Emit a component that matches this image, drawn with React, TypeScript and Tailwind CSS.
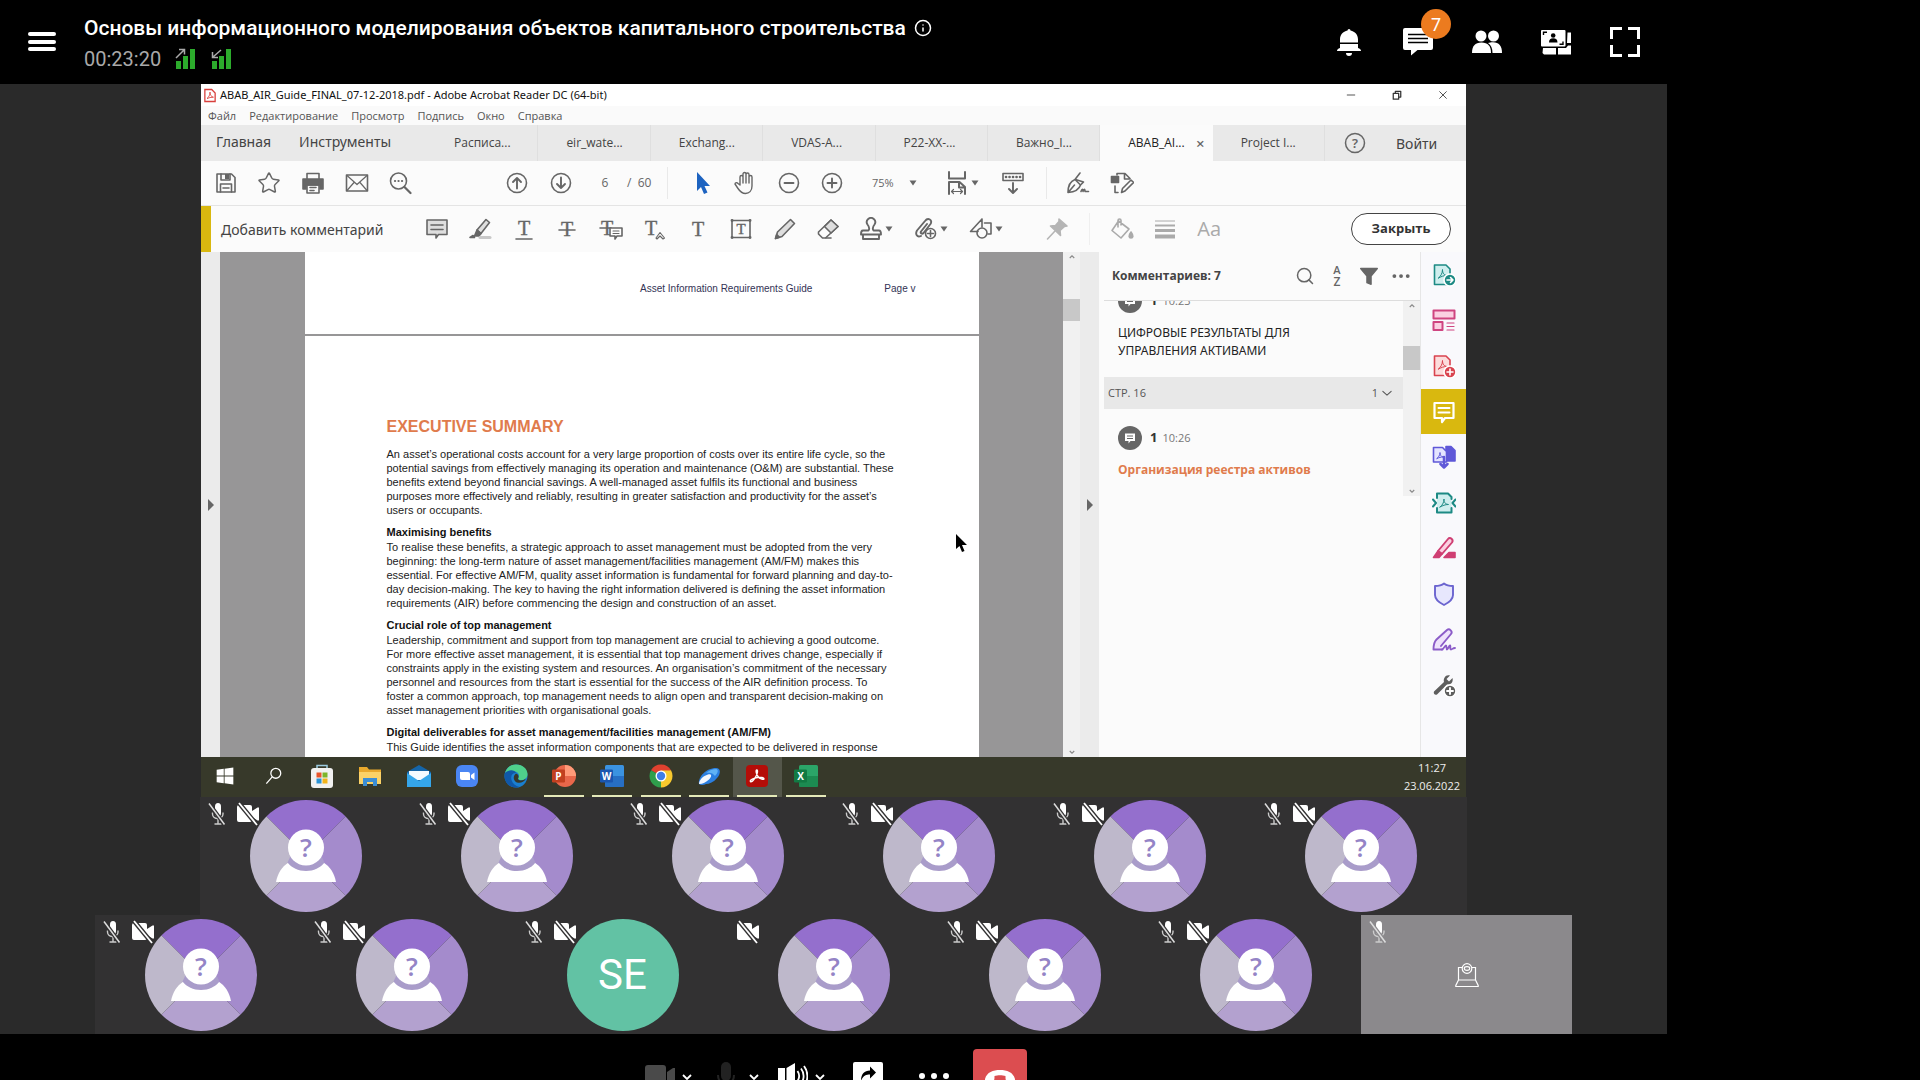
import { useState } from "react";
import type { ReactNode } from "react";
import { Info, Search, Star } from "lucide-react";

const docTabs = [
  "Расписа...",
  "eir_wate...",
  "Exchang...",
  "VDAS-A...",
  "P22-XX-...",
  "Важно_I...",
  "ABAB_AI...",
  "Project I...",
];

const menuItems = ["Файл", "Редактирование", "Просмотр", "Подпись", "Окно", "Справка"];

const sections = [
  {
    title: "",
    lines: [
      "An asset’s operational costs account for a very large proportion of costs over its entire life cycle, so the",
      "potential savings from effectively managing its operation and maintenance (O&M) are substantial. These",
      "benefits extend beyond financial savings. A well-managed asset fulfils its functional and business",
      "purposes more effectively and reliably, resulting in greater satisfaction and productivity for the asset’s",
      "users or occupants.",
    ],
  },
  {
    title: "Maximising benefits",
    lines: [
      "To realise these benefits, a strategic approach to asset management must be adopted from the very",
      "beginning: the long-term nature of asset management/facilities management (AM/FM) makes this",
      "essential. For effective AM/FM, quality asset information is fundamental for forward planning and day-to-",
      "day decision-making. The key to having the right information delivered is defining the asset information",
      "requirements (AIR) before commencing the design and construction of an asset.",
    ],
  },
  {
    title: "Crucial role of top management",
    lines: [
      "Leadership, commitment and support from top management are crucial to achieving a good outcome.",
      "For more effective asset management, it is essential that top management drives change, especially if",
      "constraints apply in the existing system and resources. An organisation’s commitment of the necessary",
      "personnel and resources from the start is essential for the success of the AIR definition process. To",
      "foster a common approach, top management needs to align open and transparent decision-making on",
      "asset management priorities with organisational goals.",
    ],
  },
  {
    title: "Digital deliverables for asset management/facilities management (AM/FM)",
    lines: ["This Guide identifies the asset information components that are expected to be delivered in response"],
  },
];

interface Participant {
  id: number;
  mic: boolean;
  camera: boolean;
  kind: "guest" | "initials" | "webcam";
}

const topRow: Participant[] = Array.from({ length: 6 }, (_, i) => ({
  id: i,
  mic: true,
  camera: true,
  kind: "guest",
}));

const bottomRow: Participant[] = [
  { id: 6, mic: true, camera: true, kind: "guest" },
  { id: 7, mic: true, camera: true, kind: "guest" },
  { id: 8, mic: true, camera: true, kind: "initials" },
  { id: 9, mic: false, camera: true, kind: "guest" },
  { id: 10, mic: true, camera: true, kind: "guest" },
  { id: 11, mic: true, camera: true, kind: "guest" },
  { id: 12, mic: true, camera: false, kind: "webcam" },
];

function Ico({ children, className = "h-6 w-6" }: { children: ReactNode; className?: string }) {
  return (
    <svg
      viewBox="0 0 24 24"
      className={`shrink-0 ${className}`}
      fill="none"
      stroke="currentColor"
      strokeWidth="1.6"
      strokeLinejoin="round"
      strokeLinecap="round"
      aria-hidden="true"
    >
      {children}
    </svg>
  );
}

function ToolButton({ label, children }: { label: string; children: ReactNode }) {
  return (
    <button aria-label={label} className="flex min-w-0 items-center justify-center">
      {children}
    </button>
  );
}

function Caret() {
  return (
    <svg viewBox="0 0 8 6" className="h-[6px] w-2 shrink-0" aria-hidden="true">
      <path d="M0.5 0.5h7L4 5.5z" fill="#666" />
    </svg>
  );
}

function LetterT({ x = 12, y = 18, size = 20 }: { x?: number; y?: number; size?: number }) {
  return (
    <text
      x={x}
      y={y}
      textAnchor="middle"
      fontSize={size}
      fontFamily="Liberation Serif, serif"
      fill="currentColor"
      stroke="currentColor"
      strokeWidth="0.4"
    >
      T
    </text>
  );
}

/* ---------- meeting header ---------- */

function Signal({ up }: { up: boolean }) {
  return (
    <svg viewBox="0 0 22 22" className="h-[22px] w-[22px]" aria-hidden="true">
      <path d="M1 13h5v8H1zM8 8h5v13H8zM15 1h5v20h-5z" fill="#2cab2c" />
      {up ? (
        <path d="M1 10L9 2M4 1.500h5.500v5" stroke="#aaa" strokeWidth="1.500" fill="none" />
      ) : (
        <path d="M10 2L2 9M1.500 4v5.500h5.500" stroke="#aaa" strokeWidth="1.500" fill="none" />
      )}
    </svg>
  );
}

function MeetingHeader() {
  return (
    <header className="flex h-[84px] shrink-0 items-start justify-between pl-7 pr-[26px]">
      <div className="flex">
        <button aria-label="Меню" className="mt-[32px] flex h-[19px] w-[28px] flex-col justify-between">
          <span className="h-1 w-full rounded-sm bg-white" />
          <span className="h-1 w-full rounded-sm bg-white" />
          <span className="h-1 w-full rounded-sm bg-white" />
        </button>
        <div className="ml-7 pt-[14px]">
          <div className="flex items-center gap-2">
            <h1 className="text-[21px] leading-7 font-medium whitespace-nowrap">
              Основы информационного моделирования объектов капитального строительства
            </h1>
            <Info className="h-[18px] w-[18px]" strokeWidth={2} />
          </div>
          <div className="flex items-center gap-[14px] pt-[3px]">
            <span className="text-[20px] leading-7 text-[#a9a9a9]">00:23:20</span>
            <Signal up />
            <Signal up={false} />
          </div>
        </div>
      </div>
      <nav className="flex gap-[37px] pt-[26px]">
        <button aria-label="Уведомления">
          <svg viewBox="0 0 32 32" className="h-8 w-8" fill="#fff" aria-hidden="true">
            <path d="M14.500 4.500a1.500 1.500 0 0 1 3 0c4.500 1 7.500 4 7.500 9v3H7v-3c0-5 3-8 7.500-9zM7 18h18v4c2 .5 3 1.500 3 3H4c0-1.500 1-2.500 3-3zM13 27h6a3 3 0 0 1-6 0z" />
          </svg>
        </button>
        <button aria-label="Чат" className="relative">
          <svg viewBox="0 0 32 32" className="h-8 w-8" aria-hidden="true">
            <path d="M3 2h26a2 2 0 0 1 2 2v18a2 2 0 0 1-2 2H15.500L9 29.500V24H3a2 2 0 0 1-2-2V4a2 2 0 0 1 2-2z" fill="#fff" />
            <path d="M6 8.500h20M6 12.500h20M6 16.500h20" stroke="#000" strokeWidth="1.500" />
          </svg>
          <span className="absolute -top-[17px] left-[19px] flex h-[30px] w-[30px] items-center justify-center rounded-full bg-[#ec7b1f] text-[18px]">
            7
          </span>
        </button>
        <button aria-label="Участники">
          <svg viewBox="0 0 32 32" className="h-8 w-8" fill="#fff" aria-hidden="true">
            <circle cx="10" cy="10" r="5.500" />
            <circle cx="22.500" cy="10" r="5.500" />
            <path d="M1 27c0-7 3-10.500 9.500-10.500S20 20 20 27z" />
            <path d="M17 17c1.500-.5 3-.7 5-.7 6 0 9 3.700 9 10.700h-9.500c0-4.500-1.500-8-4.500-10z" />
          </svg>
        </button>
        <button aria-label="Раскладка">
          <svg viewBox="0 0 32 32" className="h-8 w-8" aria-hidden="true">
            <path d="M27.500 6.500H31V17h-4zM3 22h13v6.500H4L2.500 27zM18 22h8l2-2.500h3v9H18z" fill="#fff" />
            <rect x="1" y="4" width="24.500" height="16.500" rx="1" fill="#fff" />
            <path d="M3.500 9V6.300H7M23 15.500v2.700h-3.500" stroke="#000" strokeWidth="1.400" fill="none" />
            <circle cx="13.200" cy="9.500" r="2.300" fill="#000" />
            <path d="M9 16.500c0-3 1.500-4.300 4.200-4.300s4.300 1.300 4.300 4.300z" fill="#000" />
          </svg>
        </button>
        <button aria-label="Во весь экран">
          <svg viewBox="0 0 32 32" className="h-8 w-8" aria-hidden="true">
            <path
              d="M2.500 13V2.500H13M19 2.500h10.500V13M29.500 19v10.500H19M13 29.500H2.500V19"
              stroke="#fff"
              strokeWidth="3"
              fill="none"
            />
          </svg>
        </button>
      </nav>
    </header>
  );
}

/* ---------- shared Acrobat window ---------- */

function TitleBar() {
  return (
    <div className="flex h-[22px] shrink-0 items-center justify-between bg-white pl-[3px] pr-[18px]">
      <div className="flex items-center gap-1">
        <svg viewBox="0 0 14 16" className="h-[15px] w-3" aria-hidden="true">
          <path d="M1 1h8l4 4v10H1z" fill="#fff" stroke="#d8403c" strokeWidth="1.500" />
          <path d="M3.500 11.500c2-1.500 3.500-4 3.500-7.500 0 3.500 1.500 5.500 4 6-3 0-5 .5-7.500 1.500z" stroke="#d8403c" fill="none" />
        </svg>
        <span className="font-['Noto_Sans',sans-serif] text-[11px] text-[#111]">
          ABAB_AIR_Guide_FINAL_07-12-2018.pdf - Adobe Acrobat Reader DC (64-bit)
        </span>
      </div>
      <div className="flex items-center gap-9 text-[#333]">
        <button aria-label="Свернуть">
          <Ico className="h-[10px] w-[10px]">
            <path d="M3 12h18" strokeWidth="2" />
          </Ico>
        </button>
        <button aria-label="Развернуть">
          <Ico className="h-[10px] w-[10px]">
            <path d="M3 8h13v14H3zM8 8V3h13v14h-5" strokeWidth="3" />
          </Ico>
        </button>
        <button aria-label="Закрыть окно">
          <Ico className="h-[10px] w-[10px]">
            <path d="M4 4l16 16M20 4L4 20" strokeWidth="2" />
          </Ico>
        </button>
      </div>
    </div>
  );
}

function TabBar() {
  const [active, setActive] = useState(6);
  return (
    <div className="flex h-9 shrink-0 items-stretch bg-[#e9e9e9] text-[#444]">
      <div className="flex w-[225px] shrink-0 items-center gap-7 pb-[3px] pl-[15px] font-['Noto_Sans',sans-serif] text-[14px]">
        <button>Главная</button>
        <button>Инструменты</button>
      </div>
      <div className="grid flex-1 grid-cols-8">
        {docTabs.map((name, i) => (
          <button
            key={name}
            onClick={() => setActive(i)}
            className={`relative flex items-center pl-7 text-[12px] whitespace-nowrap ${
              i === active ? "bg-[#fbfbfb] text-[#222]" : "border-r border-[#dfdfdf]"
            }`}
          >
            {name}
            {i === active && <span className="absolute right-2 text-[15px] font-semibold text-[#666]">×</span>}
          </button>
        ))}
      </div>
      <div className="flex w-[141px] shrink-0 items-center gap-[30px] pl-[19px] font-['Noto_Sans',sans-serif] text-[14px]">
        <button aria-label="Справка" className="text-[#666]">
          <svg viewBox="0 0 22 22" className="h-[22px] w-[22px]" aria-hidden="true">
            <circle cx="11" cy="11" r="9.500" fill="none" stroke="currentColor" strokeWidth="1.500" />
            <text x="11" y="15.500" textAnchor="middle" fontSize="13" fontWeight="600" fill="currentColor">
              ?
            </text>
          </svg>
        </button>
        <button>Войти</button>
      </div>
    </div>
  );
}

function MainToolbar() {
  return (
    <div className="flex h-[45px] shrink-0 items-center border-b border-[#e4e4e4] bg-[#fbfbfb] text-[#666]">
      <div className="ml-[3px] grid w-[218px] grid-cols-5">
        <ToolButton label="Сохранить">
          <Ico>
            <path d="M3 3h14.500l3.500 3.500V21H3z" />
            <path d="M7 3v6h9V3M6.500 21v-8h11v8M9 17h6" />
            <path d="M11 3h4v5h-4z" fill="currentColor" stroke="none" />
          </Ico>
        </ToolButton>
        <ToolButton label="Избранное">
          <Star className="h-6 w-6" strokeWidth={1.5} />
        </ToolButton>
        <ToolButton label="Печать">
          <Ico>
            <path d="M6 8V2.500h12V8" />
            <path d="M2 8h20v10h-3v-4H5v4H2z" fill="currentColor" />
            <path d="M6 14h12v8H6zM9 16.500h6M9 19.500h4" />
          </Ico>
        </ToolButton>
        <ToolButton label="Почта">
          <Ico>
            <path d="M1.500 4h21v16h-21z" />
            <path d="M2 4.500l10 9 10-9M2 19.500l7-8M22 19.500l-7-8" strokeWidth="1.200" />
          </Ico>
        </ToolButton>
        <ToolButton label="Найти">
          <Ico>
            <circle cx="10.500" cy="10" r="8" />
            <path d="M16.500 16l6 6" strokeWidth="2.200" />
            <path d="M7 10h.1M10.500 10h.1M14 10h.1" strokeWidth="2.200" />
          </Ico>
        </ToolButton>
      </div>
      <div className="ml-[73px] grid w-[88px] grid-cols-2">
        <ToolButton label="Предыдущая страница">
          <Ico>
            <circle cx="12" cy="12" r="9.500" />
            <path d="M12 17.500V7M8 11l4-4 4 4" strokeWidth="1.900" />
          </Ico>
        </ToolButton>
        <ToolButton label="Следующая страница">
          <Ico>
            <circle cx="12" cy="12" r="9.500" />
            <path d="M12 6.500V17M8 13l4 4 4-4" strokeWidth="1.900" />
          </Ico>
        </ToolButton>
      </div>
      <div className="ml-3 flex items-center gap-2 text-[12px]">
        <input aria-label="Страница" defaultValue="6" className="w-5 text-center text-[12px] outline-none" />
        <span className="w-[36px] pl-1 whitespace-pre">/  60</span>
      </div>
      <div className="ml-2 h-8 w-px bg-[#e9e9e9]" />
      <div className="ml-3 grid w-[174px] grid-cols-4">
        <ToolButton label="Выделение">
          <Ico>
            <path d="M7 1v19l4-4 3 7 3.500-1.500-3-6.500h5.500z" fill="#1d63c0" stroke="none" />
          </Ico>
        </ToolButton>
        <ToolButton label="Рука">
          <Ico>
            <path
              d="M7 14V6a1.500 1.500 0 0 1 3 0v6V3a1.500 1.500 0 0 1 3 0v9V3.500a1.500 1.500 0 0 1 3 0V12 6a1.500 1.500 0 0 1 3 0v9c0 5-3 7.500-6.500 7.500S7 20.500 5 17.500l-3-4.500c0-1.500 2-1.800 3-.5z"
              strokeWidth="1.400"
            />
          </Ico>
        </ToolButton>
        <ToolButton label="Уменьшить">
          <Ico>
            <circle cx="12" cy="12" r="9.500" />
            <path d="M7.500 12h9" strokeWidth="1.900" />
          </Ico>
        </ToolButton>
        <ToolButton label="Увеличить">
          <Ico>
            <circle cx="12" cy="12" r="9.500" />
            <path d="M7.500 12h9M12 7.500v9" strokeWidth="1.900" />
          </Ico>
        </ToolButton>
      </div>
      <label className="ml-[18px] flex items-center gap-[11px] text-[11px]">
        <select aria-label="Масштаб" defaultValue="75%" className="w-[26px] appearance-none bg-transparent outline-none">
          <option>75%</option>
        </select>
        <Caret />
      </label>
      <button aria-label="Ширина страницы" className="ml-7 flex items-center gap-[2px]">
        <Ico>
          <path d="M4 1v6.500h16V1" strokeWidth="2" />
          <path d="M4 23V11h10.500L20 16v7M14 11v5.500h6" strokeWidth="2" />
          <path d="M7 20.500h10M8.500 18.500l-2 2 2 2M15.500 18.500l2 2-2 2" strokeWidth="1.200" />
        </Ico>
        <Caret />
      </button>
      <button aria-label="Прокрутка" className="ml-[22px]">
        <Ico>
          <path d="M2 2.500h20v7H2z" />
          <path d="M5 6h.1M8.500 6h.1M12 6h.1M15.500 6h.1M19 6h.1" strokeWidth="2.600" />
          <path d="M12 12v9.500M8 18l4 4 4-4" strokeWidth="1.900" />
        </Ico>
      </button>
      <div className="ml-[21px] h-8 w-px bg-[#e9e9e9]" />
      <div className="ml-[9px] grid w-[88px] grid-cols-2">
        <ToolButton label="Подписать">
          <Ico>
            <path d="M2 21.500c0-6 1.500-11 7-13L14.500 14c-1.500 5-6 7-12.500 7.500zM2.500 21l6-7M9 8.500L14 2M14.500 14l3-3-8-2.500" />
            <path d="M15 20.500c1-3 2-3 2 0 1-3 2-3 2 0h3.500" />
          </Ico>
        </ToolButton>
        <ToolButton label="Редактировать">
          <Ico>
            <path d="M1.500 5.500h7v6h-7z" fill="currentColor" />
            <path d="M7 4V2.500h8l5 5M14.500 3v5h5M5 15v6.500h3M11.500 21.500l1-4 8.500-8.500 2.500 2.500-8.500 8.500z" />
          </Ico>
        </ToolButton>
      </div>
    </div>
  );
}

function CommentToolbar() {
  return (
    <div className="flex h-[46px] shrink-0 items-center bg-[#fbfbfb] pr-[15px] text-[#666]">
      <div className="h-full w-[10px] bg-[#d9b80f]" />
      <span className="w-[204px] pl-[10px] font-['Noto_Sans',sans-serif] text-[14px] text-[#444]">
        Добавить комментарий
      </span>
      <div className="grid w-[435px] grid-cols-10">
        <ToolButton label="Заметка">
          <Ico>
            <path d="M2 3h20v14.500h-8.500L11 21v-3.500H2z" fill="#dedede" />
            <path d="M6 8h12M6 12.500h12" />
          </Ico>
        </ToolButton>
        <ToolButton label="Маркер">
          <Ico>
            <path d="M9 13L18 2.500l3.500 3L13 16.500z" fill="#dedede" />
            <path d="M9 13l4 3.500-2 2.500H6.500zM2 20.500l3-2 1.500 2z" fill="currentColor" />
            <path d="M12 20.500h10" stroke="#c8c8c8" strokeWidth="3" />
          </Ico>
        </ToolButton>
        <ToolButton label="Подчеркнуть">
          <Ico>
            <LetterT />
            <path d="M4 22h16" />
          </Ico>
        </ToolButton>
        <ToolButton label="Зачеркнуть">
          <Ico>
            <LetterT y={19} />
            <path d="M4 13h16" />
          </Ico>
        </ToolButton>
        <ToolButton label="Заменить">
          <Ico>
            <LetterT x={8} />
            <path d="M1 11h11" />
            <path d="M11 11h12v8h-5l-2 3v-3h-5z" fill="#fff" />
            <path d="M14 14h6M14 16.500h6" strokeWidth="1.100" />
          </Ico>
        </ToolButton>
        <ToolButton label="Вставить">
          <Ico>
            <LetterT x={9} />
            <path d="M14 21l4-5.500 4.500 5.500-1.500 1-3-3-3 3z" strokeWidth="1.100" />
          </Ico>
        </ToolButton>
        <ToolButton label="Текст">
          <Ico>
            <LetterT y={19} />
          </Ico>
        </ToolButton>
        <ToolButton label="Текстовое поле">
          <Ico>
            <path d="M3 3.500h18v17H3z" />
            <LetterT y={17} size={15} />
            <path d="M3 3.500h.1M21 3.500h.1M3 20.500h.1M21 20.500h.1" strokeWidth="2.800" />
          </Ico>
        </ToolButton>
        <ToolButton label="Карандаш">
          <Ico>
            <path d="M2.500 21.500l2-6.500L17.500 2.500l4 4L9 19.500z" fill="#dedede" />
            <path d="M2.500 21.500l1.200-4 2.800 2.800z" fill="currentColor" />
          </Ico>
        </ToolButton>
        <ToolButton label="Ластик">
          <Ico>
            <path d="M2.500 15L15 3l7 6.500L9.500 21H6.500l-4-4z" />
            <path d="M8.500 9.500L15 16l7-6.500L15 3z" fill="#dedede" />
            <path d="M10 21h5" />
          </Ico>
        </ToolButton>
      </div>
      <div className="ml-[9px] flex gap-[21px]">
        <button aria-label="Штамп" className="flex items-center gap-[2px]">
          <Ico>
            <path d="M9.500 13.500c1.500-2 .5-4-1-6a4.200 4.200 0 1 1 7 0c-1.500 2-2.500 4-1 6H20c1.500 0 2 1 2 4H2c0-3 .5-4 2-4zM4 18v4h16v-4" strokeWidth="1.900" />
          </Ico>
          <Caret />
        </button>
        <button aria-label="Вложение" className="flex items-center gap-[2px]">
          <Ico>
            <path d="M7 19c-4 2-6-2-4-5.500L11 4c3-4 8-1 5.500 3L9.500 16c-1.500 1.500-3.500 0-2.500-1.500L13 7" strokeWidth="1.900" />
            <circle cx="16.500" cy="16.500" r="5" fill="#fff" />
            <path d="M16.500 13.500v6M13.500 16.500h6" />
          </Ico>
          <Caret />
        </button>
        <button aria-label="Фигуры" className="flex items-center gap-[2px]">
          <Ico>
            <path d="M13 2L1.500 14.500H9M13 2v8M15.500 6H22v11h-3" />
            <circle cx="13" cy="16" r="5" />
          </Ico>
          <Caret />
        </button>
      </div>
      <div className="ml-[42px] text-[#b5b5b5]">
        <Ico>
          <path d="M14 2l8 7-2.500.5-4.500 4 .5 5L5.500 9l5-.5L14 4.500z" fill="currentColor" />
          <path d="M10 14l-7.500 8" />
        </Ico>
      </div>
      <div className="ml-5 h-8 w-px bg-[#efefef]" />
      <div className="ml-[10px] grid w-[131px] grid-cols-3 text-[#aaa]">
        <ToolButton label="Заливка">
          <Ico>
            <path d="M8.500 4L2 13.500 11 21l8-9zM8 10V3.500c0-2 3-2 3 0V8" />
            <path d="M21 15c3 4 2 6 0 6s-3-2 0-6z" fill="currentColor" />
          </Ico>
        </ToolButton>
        <ToolButton label="Толщина линии">
          <Ico>
            <path d="M2 4h20" strokeWidth="1" strokeLinecap="butt" />
            <path d="M2 8.500h20" strokeWidth="2" strokeLinecap="butt" />
            <path d="M2 13.500h20" strokeWidth="3" strokeLinecap="butt" />
            <path d="M2 19.500h20" strokeWidth="4" strokeLinecap="butt" />
          </Ico>
        </ToolButton>
        <ToolButton label="Шрифт">
          <span className="text-[20px] leading-6 text-[#aaa]">Aa</span>
        </ToolButton>
      </div>
      <button className="ml-auto h-8 w-[100px] rounded-full border border-[#444] bg-white text-[13px] font-bold text-[#333]">
        Закрыть
      </button>
    </div>
  );
}

function DocumentPage() {
  return (
    <div className="relative flex min-w-0 flex-1 justify-center overflow-hidden bg-[#979697]">
      <div className="flex w-[674px] flex-col font-['Liberation_Sans',Arial,sans-serif] text-[#111]">
        <div className="h-[82px] shrink-0 bg-white pt-[29px] pr-[63px] text-right text-[10px] leading-4 text-[#335]">
          <span className="mr-[72px]">Asset Information Requirements Guide</span>
          <span>Page v</span>
        </div>
        <div className="h-[2px] shrink-0 bg-[#979697]" />
        <div className="flex-1 bg-white pt-[81px] pl-[82px]">
          <h2 className="text-[16px] leading-5 font-bold text-[#e07b4c]">EXECUTIVE SUMMARY</h2>
          <div className="flex flex-col gap-2 pt-[10px]">
            {sections.map((s) => (
              <section key={s.title}>
                {s.title && <h3 className="text-[11px] leading-[15px] font-bold">{s.title}</h3>}
                {s.lines.map((line) => (
                  <p key={line} className="text-[11px] leading-[14px] whitespace-nowrap text-[#222]">
                    {line}
                  </p>
                ))}
              </section>
            ))}
          </div>
        </div>
      </div>
      {/* presenter's cursor */}
      <svg viewBox="0 0 12 18" className="absolute top-[282px] left-[736px] h-[18px] w-3" aria-hidden="true">
        <path d="M0 0v15l3.500-3 2.500 6 2.500-1-2.500-6h5z" fill="#000" />
      </svg>
    </div>
  );
}

function SideStrip() {
  return (
    <div className="flex w-[19px] shrink-0 items-center justify-center bg-[#ebebeb]">
      <svg viewBox="0 0 6 12" className="h-3 w-[6px]" aria-hidden="true">
        <path d="M0 0l6 6-6 6z" fill="#666" />
      </svg>
    </div>
  );
}

function TinyArrow({ down = false }: { down?: boolean }) {
  return (
    <svg viewBox="0 0 8 6" className="h-[5px] w-[6px]" aria-hidden="true">
      <path d={down ? "M1 1l3 3 3-3" : "M1 5l3-3 3 3"} stroke="#888" strokeWidth="1.500" fill="none" />
    </svg>
  );
}

function CommentHead({ time }: { time: string }) {
  return (
    <div className="flex items-center">
      <svg viewBox="0 0 24 24" className="h-6 w-6" aria-hidden="true">
        <circle cx="12" cy="12" r="12" fill="#666" />
        <path d="M7 7.500h10v7.500h-4.500L10.500 17.500V15H7z" fill="#fff" />
        <path d="M9 10h6M9 12.500h6" stroke="#666" />
      </svg>
      <span className="ml-2 text-[13px] font-bold text-[#333]">1</span>
      <span className="ml-[5px] text-[11px] text-[#777]">{time}</span>
    </div>
  );
}

function CommentsPanel() {
  return (
    <aside className="flex w-[321px] shrink-0 flex-col bg-[#fbfbfb] pl-[5px]">
      <div className="flex h-[49px] shrink-0 items-center border-b border-[#ddd] pl-2 pr-[9px]">
        <h2 className="text-[12px] leading-5 font-bold text-[#444]">Комментариев: 7</h2>
        <div className="ml-auto flex items-center gap-3 text-[#666]">
          <button aria-label="Поиск">
            <Search className="h-5 w-5" strokeWidth={1.8} />
          </button>
          <button aria-label="Сортировка">
            <svg viewBox="0 0 20 24" className="h-6 w-5" fill="currentColor" aria-hidden="true">
              <text x="10" y="10" textAnchor="middle" fontSize="11" fontWeight="600">
                A
              </text>
              <text x="10" y="22" textAnchor="middle" fontSize="12" fontWeight="600">
                Z
              </text>
            </svg>
          </button>
          <button aria-label="Фильтр">
            <Ico className="h-5 w-5">
              <path d="M2 3h20l-7.500 9v10l-5-2v-8z" fill="currentColor" />
            </Ico>
          </button>
          <button aria-label="Ещё">
            <Ico className="h-5 w-5">
              <path d="M4 12h.1M12 12h.1M20 12h.1" strokeWidth="4.500" />
            </Ico>
          </button>
        </div>
      </div>
      <div className="flex h-[195px] shrink-0">
        <div className="min-w-0 flex-1 overflow-hidden">
          <div className="-mt-3 h-[88px] pl-[14px]">
            <CommentHead time="10:23" />
            <p className="pt-[11px] font-['Noto_Sans',sans-serif] text-[12px] leading-[18px] text-[#222]">
              ЦИФРОВЫЕ РЕЗУЛЬТАТЫ ДЛЯ
              <br />
              УПРАВЛЕНИЯ АКТИВАМИ
            </p>
          </div>
          <button className="flex h-8 w-full items-center justify-between bg-[#e8e8e8] pl-1 pr-[11px] text-[11px] text-[#555]">
            <span>СТР. 16</span>
            <span className="flex items-center gap-1">
              1
              <Ico className="h-[10px] w-[10px]">
                <path d="M2 8l10 9L22 8" strokeWidth="2.500" />
              </Ico>
            </span>
          </button>
          <div className="pt-[17px] pl-[14px]">
            <CommentHead time="10:26" />
            <p className="pt-[11px] text-[12px] leading-[18px] font-bold text-[#e07b4c]">Организация реестра активов</p>
          </div>
        </div>
        <div className="flex w-[17px] flex-col items-center bg-[#f1f1f1] py-[2px]">
          <TinyArrow />
          <div className="mt-[38px] h-6 w-full bg-[#c8c8c8]" />
          <div className="mt-auto">
            <TinyArrow down />
          </div>
        </div>
      </div>
    </aside>
  );
}

const pdfMark = "M6.500 15c2-1.500 4-4.500 4-8.500 0 4 1.500 5.500 4.500 6-3.500 0-5.500 1-8.500 2.500z";

const railTools = [
  {
    name: "Экспорт",
    color: "#1d8a84",
    art: (
      <>
        <path d="M2.500 2h11.500l4 4v15.500H2.500z" fill="#cfeeee" />
        <path d={pdfMark} strokeWidth="1" />
        <circle cx="18" cy="17" r="6" fill="currentColor" stroke="#fff" />
        <path d="M15 17h6M18.500 14.500L21 17l-2.500 2.500" stroke="#fff" />
      </>
    ),
  },
  {
    name: "Компоновка",
    color: "#cf4580",
    art: (
      <>
        <path d="M1.500 2.500h21v8h-21zM1.500 14h9v8h-9z" fill="#fbd0e2" strokeWidth="2" />
        <path d="M15 15h7M15 18.500h7M15 22h7" strokeWidth="1.200" />
      </>
    ),
  },
  {
    name: "Создать PDF",
    color: "#d9434f",
    art: (
      <>
        <path d="M2.500 2h11.500l4 4v15.500H2.500z" fill="#fcdcdc" />
        <path d={pdfMark} strokeWidth="1" />
        <circle cx="18" cy="18" r="6" fill="currentColor" stroke="#fff" />
        <path d="M15 18h6M18 15v6" stroke="#fff" />
      </>
    ),
  },
  {
    name: "Комментарий",
    color: "#ffffff",
    art: (
      <>
        <path d="M2.500 3h19v15H13l-3 4v-4H2.500z" strokeWidth="2.200" />
        <path d="M6.500 8h11M6.500 12.500h11" strokeWidth="2" />
      </>
    ),
  },
  {
    name: "Объединить",
    color: "#5f58d8",
    art: (
      <>
        <path d="M14 1.500h5l4 4V16h-9z" fill="currentColor" />
        <path d="M1.500 2.500h9l4 4V17h-13z" fill="#e4e4ff" />
        <path d="M5 13.500c1.500-1 3-3.500 3-6 0 2.500 1 4 3 4.500-2 0-4 .5-6 1.500z" strokeWidth="1" />
        <path d="M12 12v10M8.500 19l3.500 3.500 3.500-3.500" strokeWidth="2.500" />
      </>
    ),
  },
  {
    name: "Сжать PDF",
    color: "#1d8a84",
    art: (
      <>
        <path d="M5 6.500V2.500h11l3.500 3.500v15.500H5z" fill="#cfeeee" stroke="none" />
        <path d="M5 7V2.500h11l3.500 3.500v2M5 17v4.500h14.500V17M1 8.500l3 3.500-3 3.500M23.500 8.500L20.500 12l3 3.500" strokeWidth="2" />
        <path d="M8 16c2-1.500 4-4 4-8 0 4 1.500 5 4.500 5.500-3.500 0-5.500 1-8.500 2.500z" strokeWidth="1" />
      </>
    ),
  },
  {
    name: "Исправления",
    color: "#cf3f73",
    art: (
      <>
        <path d="M6 15L16 3c2-2.500 6 .5 4 3.500L10 18z" fill="#fbd0e2" strokeWidth="1.900" />
        <path d="M1.500 21.500L6 15l4 3-3 3.500zM12 21.500l5-5h6v5z" fill="currentColor" />
      </>
    ),
  },
  {
    name: "Защитить",
    color: "#6b64cf",
    art: <path d="M12 1.500c2.500 2 5.500 2.500 9 2.500v9c0 4.500-4 7.500-9 10-5-2.500-9-5.500-9-10V4c3.500 0 6.500-.5 9-2.500z" fill="#e7e7fd" strokeWidth="1.900" />,
  },
  {
    name: "Подпись",
    color: "#8b5cc8",
    art: (
      <>
        <path d="M10.500 21.500h-9c0-5 1-8 3-10L15 2c2.500-2 6 1.500 4 4L9 18" fill="#eee2fb" strokeWidth="1.900" />
        <path d="M10 21.500c2-1 3-4 4-4s0 4 1 4 2-4 3-4-.5 4 1 4 1.500-1.500 4-1.500" strokeWidth="1.800" />
      </>
    ),
  },
  {
    name: "Другие инструменты",
    color: "#5e5e5e",
    art: (
      <>
        <path d="M2 18.500L12 9c-1-4 2-8 6-6.500L14.500 6l2.500 2.500L20.500 5c1 4-1.500 7-5.500 6.500L5 21.500c-2 1-4-1-3-3z" fill="currentColor" stroke="none" />
        <circle cx="18" cy="18" r="6" fill="currentColor" stroke="#fff" />
        <path d="M15 18h6M18 15v6" stroke="#fff" strokeWidth="1.900" />
      </>
    ),
  },
];

function ToolRail() {
  return (
    <div className="w-[46px] shrink-0 border-l border-[#e6e6e6] bg-[#f9f9fc]">
      <div className="grid h-[456px] grid-rows-10">
        {railTools.map((t) => (
          <button
            key={t.name}
            aria-label={t.name}
            style={{ color: t.color }}
            className={`flex items-center justify-center ${t.name === "Комментарий" ? "bg-[#d9b80f]" : ""}`}
          >
            <Ico>{t.art}</Ico>
          </button>
        ))}
      </div>
    </div>
  );
}

/* ---------- Windows taskbar ---------- */

function OfficeIcon({ letter, dark, light, round = false }: { letter: string; dark: string; light: string; round?: boolean }) {
  return (
    <svg viewBox="0 0 24 24" className="h-6 w-6" aria-hidden="true">
      {round ? (
        <>
          <circle cx="13" cy="12" r="11" fill={light} />
          <path d="M13 1a11 11 0 0 1 11 11H13z" fill="#ff9a78" />
        </>
      ) : (
        <>
          <rect x="5" y="1" width="19" height="22" rx="1.500" fill={light} />
          <path d="M5 12h19v10a1 1 0 0 1-1 1H6a1 1 0 0 1-1-1z" fill={dark} opacity="0.6" />
        </>
      )}
      <rect x="0" y="5.500" width="13" height="13" rx="1.200" fill={dark} />
      <text x="6.500" y="15.500" textAnchor="middle" fontSize="10" fontWeight="700" fill="#fff">
        {letter}
      </text>
    </svg>
  );
}

const taskbarApps: { name: string; open?: boolean; current?: boolean; icon: ReactNode }[] = [
  {
    name: "Пуск",
    icon: (
      <svg viewBox="0 0 24 24" className="h-5 w-5" fill="#fff" aria-hidden="true">
        <path d="M2 4.500l8.500-1.200v8.200H2zM11.500 3.200L22 1.800v9.700H11.500zM2 12.500h8.500v8.200L2 19.500zM11.500 12.500H22v9.700l-10.500-1.400z" />
      </svg>
    ),
  },
  {
    name: "Поиск",
    icon: (
      <svg viewBox="0 0 20 20" className="h-[18px] w-[18px]" fill="none" stroke="#fff" strokeWidth="1.400" aria-hidden="true">
        <circle cx="12" cy="7" r="5.500" />
        <path d="M8 11l-6.500 7.500" />
      </svg>
    ),
  },
  {
    name: "Microsoft Store",
    icon: (
      <svg viewBox="0 0 24 24" className="h-6 w-6" aria-hidden="true">
        <path d="M7 5V1.500h10V5" fill="none" stroke="#9ccbe0" strokeWidth="1.500" />
        <rect x="1" y="4" width="22" height="20" rx="3" fill="#f1f1f1" />
        <path d="M6.500 8.500h5v5h-5z" fill="#e8542c" />
        <path d="M12.500 8.500h5v5h-5z" fill="#7db52a" />
        <path d="M6.500 14.500h5v5h-5z" fill="#2a93d6" />
        <path d="M12.500 14.500h5v5h-5z" fill="#f2b41c" />
      </svg>
    ),
  },
  {
    name: "Проводник",
    icon: (
      <svg viewBox="0 0 24 24" className="h-6 w-6" aria-hidden="true">
        <path d="M1 3h8l2 2.500h12V20H1z" fill="#e9a92d" />
        <path d="M1 8h22v12H1z" fill="#fbd267" />
        <path d="M5 22v-8h14v8h-4v-4H9v4z" fill="#3c8ed4" />
      </svg>
    ),
  },
  {
    name: "Почта",
    icon: (
      <svg viewBox="0 0 24 24" className="h-6 w-6" aria-hidden="true">
        <path d="M0 8l12-7 12 7v14H0z" fill="#1565a8" />
        <path d="M2 7h20v9H2z" fill="#f4faff" />
        <path d="M0 9l12 8 12-8v14H0z" fill="#35a6ea" />
      </svg>
    ),
  },
  {
    name: "Zoom",
    icon: (
      <svg viewBox="0 0 24 24" className="h-6 w-6" aria-hidden="true">
        <rect x="1" y="1" width="22" height="22" rx="6" fill="#4a86f3" />
        <path d="M5 8h8a2 2 0 0 1 2 2v6H7a2 2 0 0 1-2-2zM16 11l3.500-2.500v7.500L16 13.500z" fill="#fff" />
      </svg>
    ),
  },
  {
    name: "Edge",
    icon: (
      <svg viewBox="0 0 24 24" className="h-6 w-6" aria-hidden="true">
        <circle cx="12" cy="12" r="11.500" fill="#1a7fd0" />
        <path d="M1 9C3 3 7 .5 12 .5c7 0 11.500 4.500 11.500 9.500 0 4-3 6-6 6-2.500 0-4-1-3-2.500 1.500-3-.5-6-4.500-6C6 7.500 2.500 8 1 9z" fill="#4fd08b" />
        <path d="M1 9c4-4 10-3 11 0-4 0-5.500 3-4.500 7 1 3.500 4 6 8 7C6 25 .5 19 .5 12z" fill="#1058a8" />
        <path d="M12 9.500c3 1 3 4 2 5 0 2.500 5 2.500 8 0-2 4-6 5-9 4s-5-6-1-9z" fill="#37382a" />
      </svg>
    ),
  },
  { name: "PowerPoint", open: true, icon: <OfficeIcon letter="P" dark="#c2401f" light="#e8674a" round /> },
  { name: "Word", open: true, icon: <OfficeIcon letter="W" dark="#1a56b0" light="#3b93e0" /> },
  {
    name: "Chrome",
    open: true,
    icon: (
      <svg viewBox="0 0 24 24" className="h-6 w-6" aria-hidden="true">
        <path d="M12 12L2 6.300A11.500 11.500 0 0 1 22 6.300z" fill="#e0412f" />
        <path d="M12 12L22 6.300a11.500 11.500 0 0 1-10 17.200z" fill="#f8c92e" />
        <path d="M12 12v11.500A11.500 11.500 0 0 1 2 6.300z" fill="#2f9e4c" />
        <path d="M12 6.500h10l-5.500 8z" fill="#f8c92e" />
        <circle cx="12" cy="12" r="5.500" fill="#fff" />
        <circle cx="12" cy="12" r="4.200" fill="#3f7de8" />
      </svg>
    ),
  },
  {
    name: "Клиент",
    open: true,
    icon: (
      <svg viewBox="0 0 24 24" className="h-6 w-6" aria-hidden="true">
        <path d="M2 20C1 13 9 4 19 4c5 0 5 6 1 10-3 4-8 6-11 6-2 1-5 1.500-7 0z" fill="#2b7fe0" />
        <path d="M2 20c0-4 4-8 9-9.500 4-1 4 2 1 5-3 2.500-6 4.500-10 4.500z" fill="#f4f8ff" />
        <path d="M9 9c3-2.500 7-4 10-4 3 .5 2 4-1 7-2-3-5-4-9-3z" fill="#5fb2f5" />
      </svg>
    ),
  },
  {
    name: "Acrobat",
    open: true,
    current: true,
    icon: (
      <svg viewBox="0 0 24 24" className="h-6 w-6" aria-hidden="true">
        <rect x="1" y="1" width="22" height="22" rx="4" fill="#b40d08" />
        <path
          d="M5.500 17.500c-1-1.500 3.500-3.500 7-4 2.500-.3 6.500-.2 6.500 1.200s-4 .3-6-2.200c-1.800-2.300-2.500-6.500-1.200-6.500s.7 4-1.300 7.200c-1.500 2.500-4 5.500-5 4.300z"
          fill="none"
          stroke="#fff"
          strokeWidth="1.400"
        />
      </svg>
    ),
  },
  { name: "Excel", open: true, icon: <OfficeIcon letter="X" dark="#127a43" light="#2ba568" /> },
];

function Taskbar() {
  return (
    <div className="flex h-10 shrink-0 bg-[#37392a]">
      <div className="flex w-[629px]">
        {taskbarApps.map((app) => (
          <button
            key={app.name}
            aria-label={app.name}
            className={`flex flex-1 flex-col items-center justify-between pt-[7px] ${app.current ? "bg-[#54564a]" : ""}`}
          >
            <span className="flex h-6 items-center">{app.icon}</span>
            <span className={`h-[2px] w-10 ${app.open ? "bg-[#e4e9b8]" : ""}`} />
          </button>
        ))}
      </div>
      <div className="ml-auto pt-[2px] pr-[6px] text-center text-[11px] leading-[18px] text-[#eee]">
        <div>11:27</div>
        <div>23.06.2022</div>
      </div>
    </div>
  );
}

function SharedScreen() {
  return (
    <section className="mx-[201px] flex min-h-0 flex-1 flex-col bg-white font-['Open_Sans','Noto_Sans',sans-serif]">
      <TitleBar />
      <nav className="flex h-[19px] shrink-0 items-center gap-[13px] bg-[#fafafa] pt-[2px] pl-[7px] text-[11px] text-[#555]">
        {menuItems.map((item) => (
          <button key={item}>{item}</button>
        ))}
      </nav>
      <TabBar />
      <MainToolbar />
      <CommentToolbar />
      <div className="flex min-h-0 flex-1">
        <SideStrip />
        <DocumentPage />
        <div className="flex w-[17px] shrink-0 flex-col items-center bg-[#f1f1f1] py-[2px]">
          <TinyArrow />
          <div className="mt-10 h-[22px] w-full bg-[#c8c8c8]" />
          <div className="mt-auto">
            <TinyArrow down />
          </div>
        </div>
        <SideStrip />
        <CommentsPanel />
        <ToolRail />
      </div>
      <Taskbar />
    </section>
  );
}

/* ---------- participants ---------- */

function GuestAvatar() {
  return (
    <svg viewBox="0 0 112 112" className="h-28 w-28" role="img" aria-label="Гость">
      <clipPath id="avatar-round">
        <circle cx="56" cy="56" r="56" />
      </clipPath>
      <g clipPath="url(#avatar-round)">
        <path d="M0 0h112L56 56z" fill="#946fcd" />
        <path d="M112 0v112L56 56z" fill="#a48bcc" />
        <path d="M0 112h112L56 56z" fill="#b3a1cf" />
        <path d="M0 0v112l56-56z" fill="#beb8cb" />
      </g>
      <path d="M26 82c1.500-8.500 6-15.500 12.500-19.500h35C80 66.500 84.500 73.500 86 82z" fill="#fff" />
      {/* collar shade between the head and the shoulders */}
      <path d="M37.500 62.500L42 53h28l4.500 9.500C70 68 64 71 56 71s-14-3-18.500-8.500z" fill="#a99cca" />
      <circle cx="56" cy="47.500" r="18" fill="#fff" />
      <text x="56" y="57" textAnchor="middle" fontSize="26" fontWeight="600" fontFamily="Open Sans, sans-serif" fill="#9484c6">
        ?
      </text>
    </svg>
  );
}

function MicOff({ cut }: { cut: string }) {
  return (
    <svg viewBox="0 0 18 24" className="h-6 w-[18px]" aria-hidden="true">
      <path d="M7 4.500a3 3.500 0 0 1 6 0V11a3 3.500 0 0 1-6 0z" fill="#fff" />
      <path d="M4.500 10.500v1.500c0 6 10.500 6 10.500 0v-1.500M10 17v4.500M6.500 22h7" stroke="#ccc" strokeWidth="1.400" fill="none" />
      <path d="M1 1.500l15.500 21" stroke={cut} strokeWidth="4" />
      <path d="M1 1.500l15.500 21" stroke="#ddd" strokeWidth="1.500" />
    </svg>
  );
}

function CamOff() {
  return (
    <svg viewBox="0 0 24 24" className="h-6 w-6" aria-hidden="true">
      <path d="M1 5a2 2 0 0 1 2-2h11a2 2 0 0 1 2 2v4l5.500-3.500h1.500v13h-1.500L16 15v3a2 2 0 0 1-2 2H3a2 2 0 0 1-2-2z" fill="#fff" />
      <path d="M3 1l18 22" stroke="#323132" strokeWidth="4.500" />
      <path d="M3 1l18 22" stroke="#fff" strokeWidth="1.800" />
    </svg>
  );
}

function Tile({ person }: { person: Participant }) {
  const webcam = person.kind === "webcam";
  return (
    <div className={`relative flex flex-1 items-center justify-center ${webcam ? "bg-[#8b898c]" : "bg-[#323132]"}`}>
      {person.kind === "guest" && <GuestAvatar />}
      {person.kind === "initials" && (
        <div className="flex h-28 w-28 items-center justify-center rounded-full bg-[#62c2a4] text-[42px]">SE</div>
      )}
      {webcam && (
        <svg viewBox="0 0 24 24" className="h-6 w-6" fill="none" stroke="#fff" strokeWidth="1.200" aria-label="Веб-камера">
          <circle cx="12" cy="5.500" r="4.800" />
          <ellipse cx="12" cy="5.500" rx="2.700" ry="1.800" />
          <path d="M7 4.500H3.500V17h17V4.500H17M3.500 17L.8 22.500v1h22.400v-1L20.500 17" />
        </svg>
      )}
      <div className="absolute top-[5px] left-2 flex gap-[10px]">
        {person.mic && <MicOff cut={webcam ? "#8b898c" : "#323132"} />}
        {person.camera && <CamOff />}
      </div>
    </div>
  );
}

/* ---------- call controls ---------- */

function Chevron() {
  return (
    <svg viewBox="0 0 10 8" className="mt-[2px] h-2 w-[10px]" aria-hidden="true">
      <path d="M1 2l4 4 4-4" stroke="#fff" strokeWidth="1.800" fill="none" />
    </svg>
  );
}

function CallBar() {
  return (
    <footer className="h-[46px] shrink-0 overflow-hidden bg-black pt-[15px]">
      <div className="flex h-[54px] items-center justify-center pl-1">
        <button aria-label="Камера" className="flex items-center gap-[7px]">
          <svg viewBox="0 0 30 24" className="h-6 w-[30px]" fill="#4a4a4a" aria-hidden="true">
            <rect x="0" y="1" width="21" height="22" rx="3" />
            <path d="M22 8l6-4h2v16h-2l-6-4z" />
          </svg>
          <Chevron />
        </button>
        <button aria-label="Микрофон" className="ml-[25px] flex items-center gap-[14px]">
          <svg viewBox="0 0 18 30" className="h-[30px] w-[18px]" aria-hidden="true">
            <rect x="4" y="1" width="10" height="19" rx="5" fill="#222" />
            <path d="M1 14c0 12 16 12 16 0M9 23v6" stroke="#222" strokeWidth="2" fill="none" />
          </svg>
          <Chevron />
        </button>
        <button aria-label="Звук" className="ml-[19px] flex items-center gap-[7px]">
          <svg viewBox="0 0 30 28" className="h-7 w-[30px]" aria-hidden="true">
            <path d="M0 6h7v16H0zM8.500 6L17 1v26l-8.500-5z" fill="#fff" />
            <path d="M19.500 9c2 3 2 7 0 10M23 6.500c3.500 4.500 3.500 10.500 0 15M26 4c4.500 6 4.500 14 0 20" stroke="#fff" strokeWidth="1.800" fill="none" />
          </svg>
          <Chevron />
        </button>
        <button aria-label="Поделиться экраном" className="ml-7">
          <svg viewBox="0 0 30 28" className="h-7 w-[30px]" aria-hidden="true">
            <rect width="30" height="28" rx="2" fill="#fff" />
            <path d="M8 19c0-7 3-10 9-10.500V4.500l6 6-6 6v-4c-4 0-7 1-9 6.500z" fill="#000" />
          </svg>
        </button>
        <button aria-label="Ещё" className="ml-[36px]">
          <svg viewBox="0 0 30 8" className="h-2 w-[30px]" fill="#fff" aria-hidden="true">
            <circle cx="3" cy="4" r="3" />
            <circle cx="15" cy="4" r="3" />
            <circle cx="27" cy="4" r="3" />
          </svg>
        </button>
        <button aria-label="Завершить" className="ml-[24px] flex h-[54px] w-[54px] items-center justify-center rounded bg-[#dc4d50]">
          <svg viewBox="0 0 32 14" className="h-[14px] w-8" aria-hidden="true">
            <path d="M1 10C3 3 9 1 16 1s13 2 15 9c0 3-1 3.500-3 3l-5-1c-1.500-.5-1.500-2-1.500-5-3-1-8-1-11 0 0 3 0 4.500-1.500 5l-5 1c-2 .5-3 0-3-3z" fill="#fff" />
          </svg>
        </button>
      </div>
    </footer>
  );
}

export default function App() {
  return (
    <div className="flex h-screen overflow-hidden bg-black font-[Roboto,'Noto_Sans',sans-serif] text-white">
      <div className="flex min-w-0 flex-1 flex-col">
        <MeetingHeader />
        <main className="flex min-h-0 flex-1 flex-col bg-[#2a2a2a]">
          <SharedScreen />
          <div className="mx-[200px] flex h-[118px] shrink-0">
            {topRow.map((p) => (
              <Tile key={p.id} person={p} />
            ))}
          </div>
          <div className="mx-[95px] flex h-[119px] shrink-0">
            {bottomRow.map((p) => (
              <Tile key={p.id} person={p} />
            ))}
          </div>
        </main>
        <CallBar />
      </div>
      <div className="w-[253px] shrink-0" />
    </div>
  );
}
